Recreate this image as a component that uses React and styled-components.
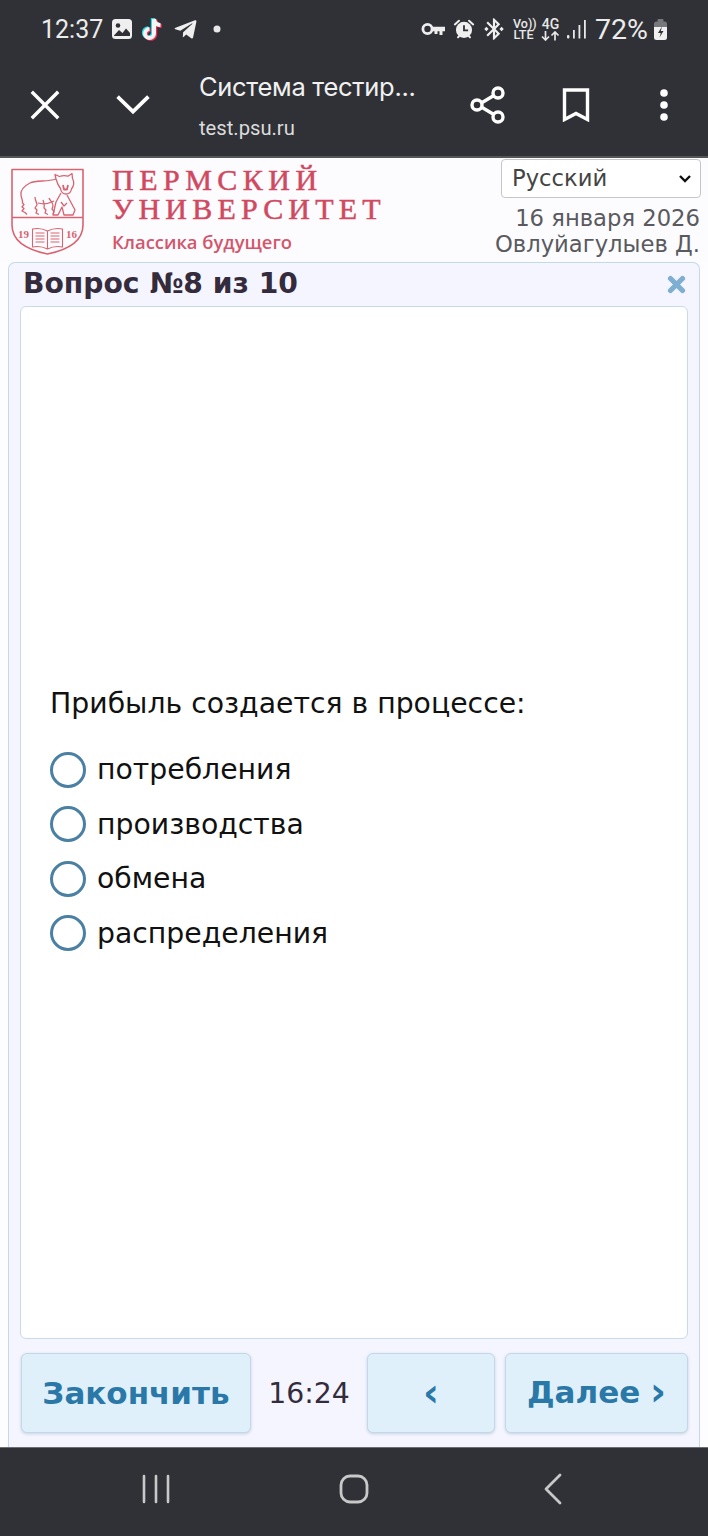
import React from "react";
import styled, { createGlobalStyle } from "styled-components";
import { FaTelegramPlane } from "react-icons/fa";
import { MdBluetoothConnected } from "react-icons/md";

const Global = createGlobalStyle`
  html, body { margin: 0; padding: 0; background: #303136; }
  * { box-sizing: border-box; }
`;

const Screen = styled.div`
  width: 708px; height: 1536px; display: flex; flex-direction: column; overflow: hidden;
  background: #fdfdff; font-family: "DejaVu Sans", sans-serif;
`;
const Chrome = styled.div`
  background: #303136; height: 158px; flex: none; border-bottom: 2px solid #55565a;
  font-family: Inter, Roboto, sans-serif; color: #f1f1f1;
`;
const StatusBar = styled.div`
  height: 56px; display: flex; align-items: center; justify-content: space-between;
  padding: 2px 40px 0 41px;
`;
const StatusGroup = styled.div`
  display: flex; align-items: center; gap: ${p => p.$gap || 8}px;
`;
const Clock = styled.span`
  font-size: 25px; font-family: Roboto, sans-serif; margin-right: 1px; color: #ececec;
`;
const Percent = styled.span`
  font-size: 28.5px; font-family: Roboto, sans-serif; color: #ececec; margin: 0 -1px 0 2px;
`;
const KeySlot = styled.span`
  display: flex; margin-right: 2px;
`;
const NetText = styled.div`
  font: 500 ${p => p.$size || 12.5}px/${p => p.$lh || 11.5}px Roboto, sans-serif; color: #e8e8e8; text-align: center; width: 21px;
`;
const Toolbar = styled.div`
  height: 100px; display: flex; align-items: center; padding-bottom: 2px;
`;
const ToolCell = styled.div`
  width: 88px; flex: none; display: flex; align-items: center; justify-content: center;
  margin-left: ${p => p.$first ? 1 : 0}px;
`;
const PageInfo = styled.div`
  flex: 1; margin-left: 22px; display: flex; flex-direction: column; gap: 15px;
`;
const PageTitle = styled.div`
  font-size: 25.5px; line-height: 30px; font-family: Inter, sans-serif; letter-spacing: -0.3px;
`;
const PageUrl = styled.div`
  font-size: 20.2px; line-height: 22px; color: #dcdcdc; font-family: Roboto, sans-serif;
`;

const Header = styled.header`
  height: 104px; flex: none; display: flex; justify-content: space-between; padding: 1px 7px 0 11px;
  background: #fcfcff;
`;
const Brand = styled.div`
  display: flex; padding-top: 9px;
`;
const WordMark = styled.div`
  margin: -3.5px 0 0 27px; color: #d1495f; display: flex; flex-direction: column;
`;
const WordLine = styled.div`
  font: 400 30px/29px "Liberation Serif", serif; letter-spacing: ${p => p.$spacing}px; white-space: nowrap;
  -webkit-text-stroke: 0.5px #d1495f;
`;
const Tagline = styled.div`
  font: 600 18.4px/22px "Open Sans", sans-serif; margin-top: 8.5px; margin-left: 0; color: #d4566a;
`;
const HeaderRight = styled.div`
  display: flex; flex-direction: column; align-items: flex-end;
`;
const LangSelect = styled.select`
  width: 200px; height: 39px; background: #fff; border: 1px solid #c6c6c8; border-radius: 4px;
  font: 22.7px "DejaVu Sans", sans-serif; color: #444; padding: 0 6px 2px 10px; appearance: none;
  background-image: url("data:image/svg+xml,%3Csvg xmlns='http://www.w3.org/2000/svg' width='14' height='9' viewBox='0 0 14 9'%3E%3Cpath d='M2 2l5 5 5-5' fill='none' stroke='%23111' stroke-width='2.4'/%3E%3C/svg%3E");
  background-repeat: no-repeat; background-position: right 8px center;
`;
const Meta = styled.div`
  font-size: 22.7px; line-height: 26px; color: #5a5a5e; margin-right: 1px;
  &:first-of-type { margin-top: 7px; }
`;

const Panel = styled.main`
  height: 1185px; margin: 0 8px; flex: none; display: flex; flex-direction: column;
  background: #f4f5fe; border: 1px solid #c5d8e8; border-bottom: none; border-radius: 7px 7px 0 0;
  padding: 0 11px;
`;
const PanelHead = styled.div`
  height: 43px; flex: none; display: flex; align-items: center; justify-content: space-between; padding: 0 2px 1px 3px;
`;
const PanelTitle = styled.h1`
  margin: 0; font: 700 28.2px/1 "DejaVu Sans", sans-serif; color: #342b3c;
`;
const Content = styled.section`
  height: 1033px; flex: none; background: #fff; border: 1px solid #c9dbe9; border-radius: 6px;
  display: flex; flex-direction: column; justify-content: center; padding: 2px 29px 0;
`;
const Question = styled.p`
  margin: 0 0 22px; font-size: 28.3px; line-height: 34px; color: #111;
`;
const OptionRow = styled.label`
  display: flex; align-items: center; height: 54.4px; gap: 11px; font-size: 28.3px; color: #111;
`;
const RadioCircle = styled.span`
  width: 36px; height: 36px; border-radius: 50%; border: 3.5px solid #4a80a3; background: #fff; flex: none;
`;
const Footer = styled.div`
  flex: 1; display: flex; align-items: flex-start; padding: 14px 0 0 1px;
`;
const ActionButton = styled.button`
  width: ${p => p.$w}px; height: 80px; margin-left: ${p => p.$ml || 0}px; flex: none;
  background: #e0f0fb; border: 1px solid #c3d7e8; border-radius: 6px; box-shadow: 0 1px 3px rgba(90,130,170,.3);
  font: 700 31px "DejaVu Sans", sans-serif; color: #2a78a8; padding: 0 0 ${p => p.$pb || 0}px; white-space: pre;
`;
const Arrow = styled.span`
  font-size: 39px; line-height: 0; vertical-align: -2px; margin-left: ${p => p.$ml || 0}px;
`;
const Timer = styled.div`
  width: 116px; flex: none; height: 80px; display: flex; align-items: center; justify-content: center;
  font-size: 28.3px; color: #342b3c;
`;
const NavRow = styled.nav`
  flex: 1; background: #303136; display: flex; align-items: center; padding-bottom: 6px;
  border-top: 1px solid #6d6e72;
`;
const NavSlot = styled.div`
  width: ${p => p.$w}px; margin-left: ${p => p.$ml}px; display: flex; justify-content: center;
`;

const stroke = { fill: "none", stroke: "currentColor", strokeLinecap: "round", strokeLinejoin: "round" };

const PhotoIcon = () => (
  <svg width="22" height="22" viewBox="0 0 22 22">
    <rect x="1" y="1" width="20" height="20" rx="3.5" fill="#efefef" />
    <circle cx="7" cy="7.5" r="2.3" fill="#303136" />
    <path d="M3 17.5 L8 12 L11.5 15 L15 10.5 L19 15 V18 H3 Z" fill="#303136" />
  </svg>
);
const NOTE = ["M14 3v14.5a4.5 4.5 0 1 1-4.5-4.5", "M14 3c.4 3.6 3 6 6.5 6.2"];
const TikTokIcon = () => (
  <svg width="26" height="26" viewBox="0 0 26 26">
    <g fill="none" strokeWidth="4" strokeLinecap="butt">
      <g stroke="#25d9e3" transform="translate(-1.2 -.8)">{NOTE.map(d => <path key={d} d={d} />)}</g>
      <g stroke="#f5264f" transform="translate(1.2 .8)">{NOTE.map(d => <path key={d} d={d} />)}</g>
      <g stroke="#f4f4f4">{NOTE.map(d => <path key={d} d={d} />)}</g>
    </g>
  </svg>
);
const KeyIcon = () => (
  <svg width="24" height="15" viewBox="0 0 24 15" fill="none">
    <circle cx="6.500" cy="7" r="4.600" stroke="#eee" strokeWidth="2.800" />
    <path d="M11 4.800h13v4.400h-2.500v3.800h-3V9.200h-2V12h-3V9.200H11z" fill="#eee" />
  </svg>
);
const AlarmIcon = () => (
  <svg width="22" height="22" viewBox="0 0 24 24">
    <circle cx="12" cy="13" r="8.800" fill="#efefef" />
    <path d="M12 8v5.500h4.500" fill="none" stroke="#303136" strokeWidth="2" />
    <path d="M2 7l4.500-4M22 7l-4.500-4M5.500 21l1.500-1.500M18.500 21L17 19.500" stroke="#efefef" strokeWidth="2.200" strokeLinecap="round" />
  </svg>
);
const ArrowPair = () => (
  <svg width="21" height="10" viewBox="0 0 21 10" fill="none" stroke="#e8e8e8" strokeWidth="1.700" style={{ display: "block" }}>
    <path d="M5.500 0v9M2 5.500L5.500 9 9 5.500M15 9.500V1M11.500 4.500L15 1l3.500 3.500" />
  </svg>
);
const SignalIcon = () => (
  <svg width="20" height="20" viewBox="0 0 20 20" fill="#e8e8e8">
    <rect x="0" y="16" width="2.400" height="3.500" rx="1" />
    <rect x="6" y="11" width="1.800" height="8.500" />
    <rect x="11.500" y="6" width="1.800" height="13.500" />
    <rect x="17" y="1" width="1.800" height="18.500" />
  </svg>
);
const BatteryIcon = () => (
  <svg width="15" height="21" viewBox="0 0 15 21">
    <rect x="4.500" y="0" width="6" height="3" rx="1" fill="#77787c" />
    <path d="M1 5a2.500 2.500 0 0 1 2.500-2.500h8A2.500 2.500 0 0 1 14 5v3H1z" fill="#77787c" />
    <path d="M1 8h13v10.500a2.500 2.500 0 0 1-2.500 2.500h-8A2.500 2.500 0 0 1 1 18.500z" fill="#f0f0f0" />
    <path d="M9 7.500L5 14h2.800L6.500 18.500 10.500 12H7.800z" fill="#303136" />
  </svg>
);
const CloseIcon = () => (
  <svg width="32" height="32" viewBox="0 0 32 32" style={{ color: "#fff" }}>
    <path d="M4 4l24 24M28 4L4 28" {...stroke} strokeWidth="3.400" strokeLinecap="square" />
  </svg>
);
const ChevronIcon = () => (
  <svg width="34" height="20" viewBox="0 0 34 20" style={{ color: "#fff" }}>
    <path d="M3 3l14 13.500L31 3" {...stroke} strokeWidth="3.800" strokeLinecap="square" strokeLinejoin="miter" />
  </svg>
);
const ShareIcon = () => (
  <svg width="36" height="38" viewBox="0 0 36 38" style={{ color: "#fff" }}>
    <path d="M28 7L8 19l20 12" {...stroke} strokeWidth="3.400" />
    <circle cx="28" cy="7" r="5" fill="#303136" stroke="#fff" strokeWidth="3.400" />
    <circle cx="7" cy="19" r="5" fill="#303136" stroke="#fff" strokeWidth="3.400" />
    <circle cx="28" cy="31" r="5" fill="#303136" stroke="#fff" strokeWidth="3.400" />
  </svg>
);
const BookmarkIcon = () => (
  <svg width="28" height="34" viewBox="0 0 28 34" style={{ color: "#fff" }}>
    <path d="M2.500 2h23v29.500L14 25.500 2.500 31.500z" {...stroke} strokeWidth="3.400" strokeLinejoin="miter" />
  </svg>
);
const DotsIcon = () => (
  <svg width="10" height="34" viewBox="0 0 10 34" fill="#fff">
    <circle cx="5" cy="5" r="3.800" /><circle cx="5" cy="17" r="3.800" /><circle cx="5" cy="29" r="3.800" />
  </svg>
);
const TimesIcon = () => (
  <svg width="19" height="19" viewBox="0 0 19 19">
    <path d="M3.500 3.500l12 12M15.500 3.500l-12 12" fill="none" stroke="#7eafd0" strokeWidth="5.200" strokeLinecap="round" />
  </svg>
);
const Logo = () => (
  <svg width="74" height="88" viewBox="0 0 74 88" fill="none" stroke="#d9636f" strokeWidth="1.300" strokeLinejoin="round">
    <path d="M1 1.500h71V57c0 17-16 25-35.500 29C17 82 1 74 1 57z" strokeWidth="1.600" />
    <path d="M1 49.500h71" strokeWidth="1.500" />
    <path d="M45 11C36 14 25 12 19 15 13 18 9.500 22 10 27c.4 4 2 5 1.500 8l1.500 1.500L11 39l2 1.500L11 43l3 1.500 2 2" />
    <path d="M24 29c0 4 2 5 2 8l-2 3 2 2-1 3 3 1.500M32 32c1 3 2 5 1 8l2 2-1 3 3 1.500M27 35c5 1.500 10 1 16-2" />
    <path d="M38 30c1 3 4 4 4 8l-1 3 2 2.500-1 3" />
    <path d="M45 11l-1-4.500 4.500 2c3-1.200 6-1.200 8.500-.3l4-2.700.5 5c2 3.500 1.500 7-1 10.500-.5 3-2.500 5-5.500 5s-5-2.500-5.500-5.500c-2.500-3-3.500-6-4.500-9.500z" />
    <path d="M50 25l-5 9-3 13h5l4-8 2 8h9l2-5-8-15" />
    <path d="M50 34l3 4 3-3" />
    <path d="M52 17l1 4.500h3l1-4.500" strokeWidth="1.800" />
    <path d="M36.500 63v18c-4-2-10-3-15-2V61c5-1 11 0 15 2zm0 0c4-2 10-3 15-2v18c-5-1-11 0-15 2M24.500 65h9M24.500 68h9M24.500 71h9M24.500 74h9M39.500 65h9M39.500 68h9M39.500 71h9M39.500 74h9" strokeWidth="1.100" />
    <text x="7" y="70" fontSize="11" fontWeight="700" fontFamily="Liberation Serif, serif" fill="#d9636f" stroke="none">19</text>
    <text x="55" y="70" fontSize="11" fontWeight="700" fontFamily="Liberation Serif, serif" fill="#d9636f" stroke="none">16</text>
  </svg>
);
const BarsIcon = () => (
  <svg width="30" height="30" viewBox="0 0 30 30" stroke="#c8c8c8" strokeWidth="2.600" strokeLinecap="round">
    <path d="M3 2v26M15 2v26M27 2v26" />
  </svg>
);
const HomeIcon = () => (
  <svg width="30" height="30" viewBox="0 0 30 30" fill="none">
    <rect x="2" y="2" width="26" height="26" rx="9" stroke="#c8c8c8" strokeWidth="2.800" />
  </svg>
);
const BackIcon = () => (
  <svg width="20" height="32" viewBox="0 0 20 32" fill="none">
    <path d="M17 2L3 16l14 14" stroke="#c8c8c8" strokeWidth="2.800" strokeLinecap="round" strokeLinejoin="round" />
  </svg>
);

const OPTIONS = ["потребления", "производства", "обмена", "распределения"];

export default function App() {
  return (
    <Screen>
      <Global />
      <Chrome>
        <StatusBar>
          <StatusGroup $gap={7}>
            <Clock>12:37</Clock>
            <PhotoIcon />
            <TikTokIcon />
            <FaTelegramPlane size={25} color="#efefef" />
            <svg width="20" height="10" viewBox="0 0 20 10"><circle cx="12" cy="5" r="3.500" fill="#e8e8e8" /></svg>
          </StatusGroup>
          <StatusGroup $gap={6}>
            <KeySlot><KeyIcon /></KeySlot>
            <AlarmIcon />
            <MdBluetoothConnected size={26} color="#efefef" />
            <NetText>Vo))<br />LTE</NetText>
            <div>
              <NetText $size={14} $lh={13}>4G</NetText>
              <ArrowPair />
            </div>
            <SignalIcon />
            <Percent>72%</Percent>
            <BatteryIcon />
          </StatusGroup>
        </StatusBar>
        <Toolbar>
          <ToolCell $first><CloseIcon /></ToolCell>
          <ToolCell><ChevronIcon /></ToolCell>
          <PageInfo>
            <PageTitle>Система тестир...</PageTitle>
            <PageUrl>test.psu.ru</PageUrl>
          </PageInfo>
          <ToolCell><ShareIcon /></ToolCell>
          <ToolCell><BookmarkIcon /></ToolCell>
          <ToolCell><DotsIcon /></ToolCell>
        </Toolbar>
      </Chrome>
      <Header>
        <Brand>
          <Logo />
          <WordMark>
            <WordLine $spacing={5.500}>ПЕРМСКИЙ</WordLine>
            <WordLine $spacing={5.200}>УНИВЕРСИТЕТ</WordLine>
            <Tagline>Классика будущего</Tagline>
          </WordMark>
        </Brand>
        <HeaderRight>
          <LangSelect defaultValue="ru"><option value="ru">Русский</option></LangSelect>
          <Meta>16 января 2026</Meta>
          <Meta>Овлуйагулыев Д.</Meta>
        </HeaderRight>
      </Header>
      <Panel>
        <PanelHead>
          <PanelTitle>Вопрос №8 из 10</PanelTitle>
          <TimesIcon />
        </PanelHead>
        <Content>
          <Question>Прибыль создается в процессе:</Question>
          {OPTIONS.map(o => (
            <OptionRow key={o}><RadioCircle />{o}</OptionRow>
          ))}
        </Content>
        <Footer>
          <ActionButton $w={230}>Закончить</ActionButton>
          <Timer>16:24</Timer>
          <ActionButton $w={128}><Arrow>‹</Arrow></ActionButton>
          <ActionButton $w={183} $ml={10} $pb={3}>Далее <Arrow $ml={-1}>›</Arrow></ActionButton>
        </Footer>
      </Panel>
      <NavRow>
        <NavSlot $w={30} $ml={141}><BarsIcon /></NavSlot>
        <NavSlot $w={30} $ml={168}><HomeIcon /></NavSlot>
        <NavSlot $w={20} $ml={174}><BackIcon /></NavSlot>
      </NavRow>
    </Screen>
  );
}
